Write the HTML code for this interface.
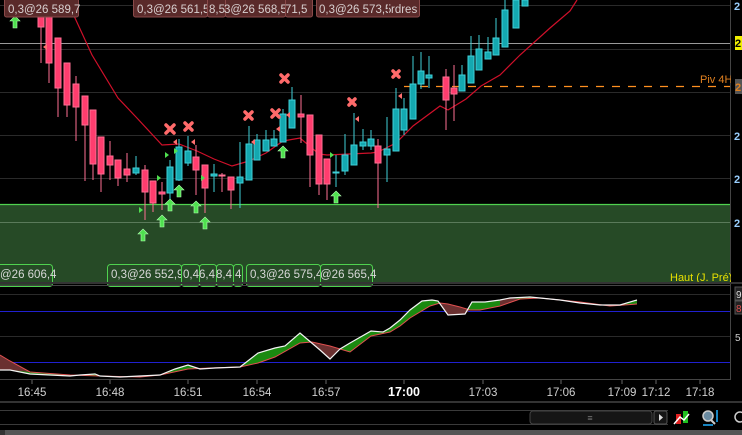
<!DOCTYPE html>
<html><head><meta charset="utf-8"><style>
html,body{margin:0;padding:0;background:#000;width:742px;height:435px;overflow:hidden;font-family:"Liberation Sans",sans-serif}
svg text{font-family:"Liberation Sans",sans-serif}
</style></head><body>
<svg width="742" height="435" viewBox="0 0 742 435" xmlns="http://www.w3.org/2000/svg">
<rect width="742" height="435" fill="#000"/>
<rect x="0" y="204" width="730" height="78" fill="#264a26"/>
<line x1="0" y1="204.5" x2="730" y2="204.5" stroke="#4fd24f" stroke-width="1.2"/>
<line x1="0" y1="222.5" x2="730" y2="222.5" stroke="#5a7a5a" stroke-width="1"/>
<g stroke="#2a2a2a" stroke-width="1">
<line x1="0" y1="5.5" x2="730" y2="5.5"/>
<line x1="0" y1="49.5" x2="730" y2="49.5"/>
<line x1="0" y1="92.5" x2="730" y2="92.5"/>
<line x1="0" y1="135.5" x2="730" y2="135.5"/>
<line x1="0" y1="178.5" x2="730" y2="178.5"/>
</g>
<line x1="0" y1="43.5" x2="742" y2="43.5" stroke="#9a9a9a" stroke-width="1"/>
<line x1="404" y1="86.5" x2="742" y2="86.5" stroke="#ff9020" stroke-width="1.3" stroke-dasharray="8,8"/>
<line x1="730.5" y1="0" x2="730.5" y2="380" stroke="#444"/>
<polyline fill="none" stroke="#d0102a" stroke-width="1.2" points="65,0 75,18 92,55 118,98 136,117 162,145 179,144 197,151 214,159 232,166 249,161 266,153 283,141 300,138 319,154 327,155 371,153 378,152 396,143 413,126 440,106 448,110 466,99 481,86 500,75 520,55 550,28 570,11 577,0"/>
<g stroke-width="1">
<g stroke="#ff6f94">
<line x1="41" y1="0" x2="41" y2="63"/><rect x="38" y="0" width="6" height="27" fill="#ff3d6e"/>
<line x1="49" y1="0" x2="49" y2="83"/><rect x="46" y="0" width="6" height="63" fill="#ff3d6e"/>
<line x1="58" y1="38" x2="58" y2="117"/><rect x="55" y="38" width="6" height="50" fill="#ff3d6e"/>
<line x1="67" y1="63" x2="67" y2="117"/><rect x="64" y="63" width="6" height="42" fill="#ff3d6e"/>
<line x1="76" y1="76" x2="76" y2="141"/><rect x="73" y="84" width="6" height="23" fill="#ff3d6e"/>
<line x1="85" y1="96" x2="85" y2="181"/><rect x="82" y="96" width="6" height="29" fill="#ff3d6e"/>
<line x1="93" y1="110" x2="93" y2="180"/><rect x="90" y="110" width="6" height="54" fill="#ff3d6e"/>
<line x1="101" y1="137" x2="101" y2="192"/><rect x="98" y="137" width="6" height="37" fill="#ff3d6e"/>
<line x1="110" y1="141" x2="110" y2="180"/><rect x="107" y="156" width="6" height="9" fill="#ff3d6e"/>
<line x1="118" y1="160" x2="118" y2="186"/><rect x="115" y="160" width="6" height="18" fill="#ff3d6e"/>
<line x1="127" y1="153" x2="127" y2="182"/><rect x="124" y="169" width="6" height="6" fill="#ff3d6e"/>
<line x1="145" y1="165" x2="145" y2="220"/><rect x="142" y="170" width="6" height="22" fill="#ff3d6e"/>
<line x1="153" y1="181" x2="153" y2="212"/><rect x="150" y="181" width="6" height="22" fill="#ff3d6e"/>
<line x1="162" y1="182" x2="162" y2="210"/><rect x="159" y="192" width="6" height="2" fill="#ff3d6e"/>
<line x1="196" y1="145" x2="196" y2="195"/><rect x="193" y="157" width="6" height="13" fill="#ff3d6e"/>
<line x1="205" y1="165" x2="205" y2="213"/><rect x="202" y="165" width="6" height="23" fill="#ff3d6e"/>
<line x1="222" y1="173" x2="222" y2="192"/><rect x="219" y="175" width="6" height="1" fill="#ff3d6e"/>
<line x1="231" y1="177" x2="231" y2="209"/><rect x="228" y="177" width="6" height="13" fill="#ff3d6e"/>
<line x1="301" y1="95" x2="301" y2="143"/><rect x="298" y="114" width="6" height="3" fill="#ff3d6e"/>
<line x1="310" y1="115" x2="310" y2="187"/><rect x="307" y="115" width="6" height="40" fill="#ff3d6e"/>
<line x1="319" y1="135" x2="319" y2="195"/><rect x="316" y="135" width="6" height="49" fill="#ff3d6e"/>
<line x1="327" y1="159" x2="327" y2="200"/><rect x="324" y="159" width="6" height="25" fill="#ff3d6e"/>
<line x1="378" y1="139" x2="378" y2="208"/><rect x="375" y="146" width="6" height="17" fill="#ff3d6e"/>
<line x1="446" y1="69" x2="446" y2="130"/><rect x="443" y="77" width="6" height="23" fill="#ff3d6e"/>
<line x1="454" y1="65" x2="454" y2="121"/><rect x="451" y="88" width="6" height="6" fill="#ff3d6e"/>
</g>
<g stroke="#3fd0d8">
<line x1="136" y1="156" x2="136" y2="175"/><rect x="133" y="168" width="6" height="5" fill="#14a8b0"/>
<line x1="170" y1="160" x2="170" y2="200"/><rect x="167" y="167" width="6" height="26" fill="#14a8b0"/>
<line x1="179" y1="139" x2="179" y2="181"/><rect x="176" y="147" width="6" height="33" fill="#14a8b0"/>
<line x1="188" y1="136" x2="188" y2="166"/><rect x="185" y="151" width="6" height="12" fill="#14a8b0"/>
<line x1="214" y1="164" x2="214" y2="192"/><rect x="211" y="174" width="6" height="2" fill="#14a8b0"/>
<line x1="240" y1="142" x2="240" y2="208"/><rect x="237" y="177" width="6" height="6" fill="#14a8b0"/>
<line x1="249" y1="126" x2="249" y2="180"/><rect x="246" y="144" width="6" height="36" fill="#14a8b0"/>
<line x1="257" y1="134" x2="257" y2="160"/><rect x="254" y="140" width="6" height="20" fill="#14a8b0"/>
<line x1="266" y1="130" x2="266" y2="151"/><rect x="263" y="140" width="6" height="11" fill="#14a8b0"/>
<line x1="274" y1="130" x2="274" y2="146"/><rect x="271" y="139" width="6" height="7" fill="#14a8b0"/>
<line x1="283" y1="109" x2="283" y2="142"/><rect x="280" y="114" width="6" height="28" fill="#14a8b0"/>
<line x1="292" y1="87" x2="292" y2="128"/><rect x="289" y="100" width="6" height="28" fill="#14a8b0"/>
<line x1="336" y1="155" x2="336" y2="187"/><rect x="333" y="172" width="6" height="1" fill="#14a8b0"/>
<line x1="345" y1="134" x2="345" y2="175"/><rect x="342" y="155" width="6" height="16" fill="#14a8b0"/>
<line x1="354" y1="113" x2="354" y2="165"/><rect x="351" y="145" width="6" height="20" fill="#14a8b0"/>
<line x1="363" y1="129" x2="363" y2="150"/><rect x="360" y="142" width="6" height="4" fill="#14a8b0"/>
<line x1="371" y1="130" x2="371" y2="150"/><rect x="368" y="139" width="6" height="7" fill="#14a8b0"/>
<line x1="387" y1="117" x2="387" y2="182"/><rect x="384" y="149" width="6" height="6" fill="#14a8b0"/>
<line x1="396" y1="88" x2="396" y2="151"/><rect x="393" y="109" width="6" height="42" fill="#14a8b0"/>
<line x1="404" y1="98" x2="404" y2="135"/><rect x="401" y="109" width="6" height="21" fill="#14a8b0"/>
<line x1="413" y1="56" x2="413" y2="119"/><rect x="410" y="84" width="6" height="35" fill="#14a8b0"/>
<line x1="421" y1="52" x2="421" y2="89"/><rect x="418" y="71" width="6" height="13" fill="#14a8b0"/>
<line x1="429" y1="56" x2="429" y2="88"/><rect x="426" y="75" width="6" height="3" fill="#14a8b0"/>
<line x1="462" y1="65" x2="462" y2="91"/><rect x="459" y="75" width="6" height="16" fill="#14a8b0"/>
<line x1="471" y1="36" x2="471" y2="83"/><rect x="468" y="56" width="6" height="27" fill="#14a8b0"/>
<line x1="479" y1="35" x2="479" y2="70"/><rect x="476" y="49" width="6" height="21" fill="#14a8b0"/>
<line x1="488" y1="37" x2="488" y2="59"/><rect x="485" y="52" width="6" height="7" fill="#14a8b0"/>
<line x1="496" y1="18" x2="496" y2="55"/><rect x="493" y="38" width="6" height="17" fill="#14a8b0"/>
<line x1="505" y1="0" x2="505" y2="47"/><rect x="502" y="10" width="6" height="37" fill="#14a8b0"/>
<line x1="516" y1="0" x2="516" y2="28"/><rect x="513" y="0" width="6" height="28" fill="#14a8b0"/>
<rect x="522" y="0" width="6" height="6" fill="#14a8b0"/>
</g>
</g>
<g stroke="#ff6a6a" stroke-width="3.5" stroke-linecap="round">
<path d="M166,125l8,8M174,125l-8,8"/><path d="M185,123l7,7M192,123l-7,7"/>
<path d="M245,112l7,7M252,112l-7,7"/><path d="M272,110l7,7M279,110l-7,7"/>
<path d="M281,75l7,7M288,75l-7,7"/><path d="M349,99l6,6M355,99l-6,6"/>
<path d="M393,71l6,6M399,71l-6,6"/>
</g>
<g fill="#ff7070">
<path d="M43,47l4,-3v6z"/><path d="M173,142l4,-3v6z"/><path d="M191,142l4,-3v6z"/><path d="M251,142l4,-3v6z"/><path d="M276,129l4,-3v6z"/><path d="M286,115l4,-3v6z"/><path d="M355,119l4,-3v6z"/><path d="M398,96l4,-3v6z"/>
</g>
<g fill="#4fe04f">
<path d="M139,207l4,3l-4,3z"/><path d="M165,152l4,3l-4,3z"/><path d="M174,148l4,3l-4,3z"/><path d="M201,175l4,3l-4,3z"/><path d="M157,175l4,3l-4,3z"/><path d="M330,152l4,3l-4,3z"/>
</g>
<g fill="#4fe04f" stroke="#b0ffb0" stroke-width="0.6">
<path d="M15,16l5,5h-3v7h-4v-7h-3z"/><path d="M143,229l5,5h-3v7h-4v-7h-3z"/><path d="M162,215l5,5h-3v7h-4v-7h-3z"/><path d="M170,199l5,5h-3v7h-4v-7h-3z"/><path d="M179,185l5,5h-3v7h-4v-7h-3z"/><path d="M196,201l5,5h-3v7h-4v-7h-3z"/><path d="M205,217l5,5h-3v7h-4v-7h-3z"/><path d="M283,146l5,5h-3v7h-4v-7h-3z"/><path d="M336,191l5,5h-3v7h-4v-7h-3z"/>
</g>
<!-- top labels: box then text in order so later boxes cover overflow -->
<g font-size="11.5">
<rect x="4.5" y="-2" width="74" height="19" rx="2" fill="#5a2a2a" stroke="#8a4a4a"/><text x="8" y="13" fill="#d8d0d0">0,3@26 589,7</text>
<rect x="133.5" y="-2" width="74" height="19" rx="2" fill="#5a2a2a" stroke="#8a4a4a"/><text x="137" y="13" fill="#d8d0d0">0,3@26 561,5</text>
<rect x="207.5" y="-2" width="18" height="19" rx="2" fill="#5a2a2a" stroke="#8a4a4a"/><text x="209" y="13" fill="#d8d0d0">8,5</text>
<rect x="225.5" y="-2" width="60" height="19" rx="2" fill="#5a2a2a" stroke="#8a4a4a"/><text x="224" y="13" fill="#d8d0d0">3@26 568,5</text>
<rect x="285.5" y="-2" width="27" height="19" rx="2" fill="#5a2a2a" stroke="#8a4a4a"/><text x="285" y="13" fill="#d8d0d0">71,5</text>
<rect x="316.5" y="-2" width="103" height="19" rx="2" fill="#5a2a2a" stroke="#8a4a4a"/><text x="319" y="13" fill="#d8d0d0">0,3@26 573,5</text>
<rect x="388" y="0" width="1" height="16" fill="#5a2a2a"/><text x="391" y="13" fill="#d8d0d0">rdres</text>
</g>
<g font-size="11.5">
<rect x="-5.5" y="264.5" width="58" height="22" rx="3" fill="#264a26" stroke="#4fd24f"/><text x="0" y="278" fill="#d8d8d8">@26 606,4</text>
<rect x="107.5" y="264.5" width="74" height="22" rx="3" fill="#264a26" stroke="#4fd24f"/><text x="111" y="278" fill="#d8d8d8">0,3@26 552,9</text>
<rect x="181.5" y="264.5" width="18" height="22" rx="3" fill="#264a26" stroke="#4fd24f"/><text x="183" y="278" fill="#d8d8d8">0,4</text>
<rect x="199.5" y="264.5" width="17" height="22" rx="3" fill="#264a26" stroke="#4fd24f"/><text x="199" y="278" fill="#d8d8d8">6,4</text>
<rect x="216.5" y="264.5" width="17" height="22" rx="3" fill="#264a26" stroke="#4fd24f"/><text x="216" y="278" fill="#d8d8d8">8,4</text>
<rect x="233.5" y="264.5" width="9" height="22" rx="3" fill="#264a26" stroke="#4fd24f"/><text x="235" y="278" fill="#d8d8d8">4</text>
<rect x="246.5" y="264.5" width="74" height="22" rx="3" fill="#264a26" stroke="#4fd24f"/><text x="250" y="278" fill="#d8d8d8">0,3@26 575,4</text>
<rect x="320.5" y="264.5" width="52" height="22" rx="3" fill="#264a26" stroke="#4fd24f"/><text x="320" y="278" fill="#d8d8d8">@26 565,4</text>
</g>
<text x="670" y="281" font-size="11" fill="#e8e000">Haut (J. Pré)</text>
<text x="700" y="83" font-size="11" fill="#e08020">Piv 4H</text>
<rect x="731" y="0" width="11" height="282" fill="#000"/>
<g font-size="11" fill="#9ad0ff" font-weight="bold">
<text x="734" y="10">2</text><text x="734" y="140">2</text><text x="734" y="183">2</text><text x="734" y="227">2</text>
</g>
<rect x="735" y="36" width="8" height="14" fill="#f0f000"/><text x="735" y="47" font-size="11" font-weight="bold" fill="#000">2</text>
<rect x="735" y="79" width="8" height="15" fill="#555"/><text x="735" y="91" font-size="11" font-weight="bold" fill="#e08020">2</text>
<rect x="0" y="282" width="742" height="2" fill="#333"/>
<g stroke-width="1">
<line x1="0" y1="285.5" x2="730" y2="285.5" stroke="#444"/>
<line x1="0" y1="294.5" x2="730" y2="294.5" stroke="#2a2a2a"/>
<line x1="0" y1="336.5" x2="730" y2="336.5" stroke="#2a2a2a"/>
<line x1="0" y1="311.5" x2="730" y2="311.5" stroke="#2020d0"/>
<line x1="0" y1="362.5" x2="730" y2="362.5" stroke="#2020d0"/>
<line x1="0" y1="379.5" x2="730" y2="379.5" stroke="#444"/>
</g>
<polygon fill="#1a8a10" points="0,370 10,370 30,374 70,376 80,375 95,374 100,376 120,377 140,376 160,375 175,369 188,365 200,369 215,368 240,367 258,353 275,348 285,346 300,333 320,350 330,359 340,349 350,343 371,331 383,332 390,328 400,320 410,310 422,301 432,300 438,301 448,315 465,314 472,302 485,302 500,300 510,298 530,297 560,300 580,303 600,305 620,305 637,300 637,304 610,306 580,302 540,298 520,299 500,306 480,310 470,310 460,307 448,304 440,303 430,306 410,318 400,326 390,332 371,336 350,352 330,346 312,342 300,343 275,357 258,363 240,367 210,368 188,369 160,375 140,377 100,376 70,375 30,372 10,361 0,355"/>
<g fill="#6a3030">
<polygon points="0,355 10,361 30,372 10,370 0,370"/>
<polygon points="300,333 312,342 330,346 340,349 330,359 320,350"/>
<polygon points="438,301 440,303 448,304 460,307 470,310 465,314 448,315"/>
<polygon points="510,298 520,299 500,306 500,300"/>
<polygon points="560,300 580,302 610,306 600,305 580,303"/>
</g>
<polyline fill="none" stroke="#e05050" stroke-width="1" points="0,355 10,361 30,372 70,375 100,376 140,377 160,375 188,369 210,368 240,367 258,363 275,357 300,343 312,342 330,346 350,352 371,336 390,332 400,326 410,318 430,306 440,303 448,304 460,307 470,310 480,310 500,306 520,299 540,298 580,302 610,306 637,304"/>
<polyline fill="none" stroke="#f4f4f4" stroke-width="1.2" points="0,370 10,370 30,374 70,376 80,375 95,374 100,376 120,377 140,376 160,375 175,369 188,365 200,369 215,368 240,367 258,353 275,348 285,346 300,333 320,350 330,359 340,349 350,343 371,331 383,332 390,328 400,320 410,310 422,301 432,300 438,301 448,315 465,314 472,302 485,302 500,300 510,298 530,297 560,300 580,303 600,305 620,305 637,300"/>
<rect x="731" y="284" width="11" height="96" fill="#000"/>
<rect x="735" y="287" width="8" height="13" fill="#222" stroke="#555"/><text x="736" y="298" font-size="10" fill="#ddd">9</text>
<rect x="735" y="301" width="8" height="13" fill="#222" stroke="#555"/><text x="736" y="312" font-size="10" fill="#e05050">8</text>
<text x="735" y="341" font-size="10" fill="#ccc">5</text>
<g stroke="#666"><line x1="32" y1="380" x2="32" y2="384"/><line x1="110" y1="380" x2="110" y2="384"/><line x1="188" y1="380" x2="188" y2="384"/><line x1="257" y1="380" x2="257" y2="384"/><line x1="326" y1="380" x2="326" y2="384"/><line x1="404" y1="380" x2="404" y2="384"/><line x1="483" y1="380" x2="483" y2="384"/><line x1="561" y1="380" x2="561" y2="384"/><line x1="622" y1="380" x2="622" y2="384"/><line x1="656" y1="380" x2="656" y2="384"/><line x1="700" y1="380" x2="700" y2="384"/></g>
<g font-size="11.5" fill="#d0d0d0" text-anchor="middle">
<text x="32" y="396">16:45</text><text x="110" y="396">16:48</text><text x="188" y="396">16:51</text><text x="257" y="396">16:54</text><text x="326" y="396">16:57</text><text x="404" y="396" font-weight="bold" font-size="12.5" fill="#fff">17:00</text><text x="483" y="396">17:03</text><text x="561" y="396">17:06</text><text x="622" y="396">17:09</text><text x="656" y="396">17:12</text><text x="700" y="396">17:18</text>
</g>
<rect x="0" y="401" width="742" height="2" fill="#333"/>
<rect x="0" y="410" width="668" height="1" fill="#3a3a3a"/>
<rect x="0" y="424" width="668" height="1" fill="#3a3a3a"/>
<rect x="530" y="411" width="122" height="13" rx="3" fill="#151515" stroke="#444"/>
<text x="590" y="421" font-size="9" fill="#777" text-anchor="middle">≡</text>
<rect x="654" y="411" width="13" height="13" rx="2" fill="#151515" stroke="#555"/>
<path d="M659,414l4,3.5l-4,3.5z" fill="#ddd"/>
<rect x="676" y="414" width="5" height="10" fill="#e02020"/><rect x="683" y="411" width="5" height="12" fill="#20c020"/>
<path d="M674,424l6,-7l4,3l5,-6" stroke="#fff" stroke-width="1.5" fill="none"/>
<circle cx="708" cy="416" r="5" fill="#6a8aa0" stroke="#ccc" stroke-width="1.5"/>
<path d="M711,420l4,4" stroke="#ccc" stroke-width="2"/>
<path d="M717,410v12M703,425h10" stroke="#20b0ff" stroke-width="1.5"/>
<circle cx="740" cy="417" r="5" fill="none" stroke="#ccc" stroke-width="1.5"/>
<rect x="0" y="430" width="742" height="5" fill="#555"/>
<rect x="0" y="430" width="5" height="5" fill="#333"/>
</svg>
</body></html>
